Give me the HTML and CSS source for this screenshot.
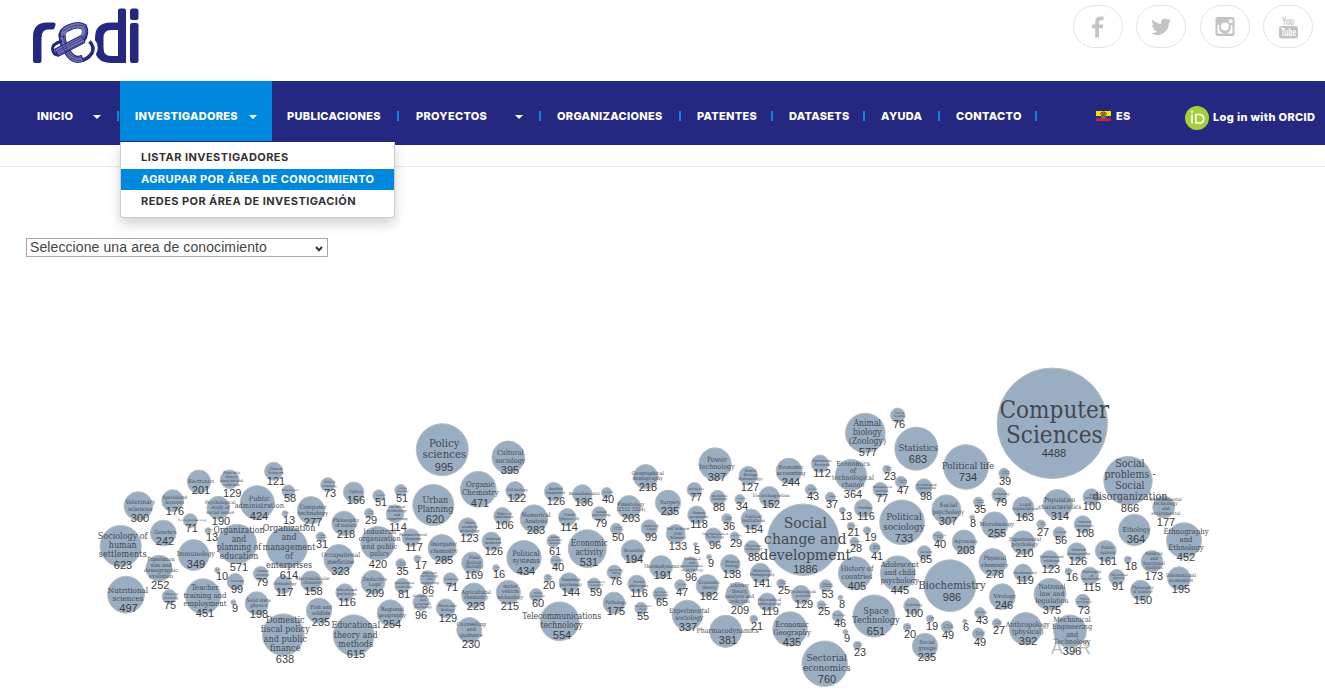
FILE: index.html
```html
<!DOCTYPE html>
<html lang="es">
<head>
<meta charset="utf-8">
<title>REDI</title>
<link rel="stylesheet" href="styles.css">
</head>
<body>
<header class="top">
  <svg class="logo" viewBox="0 0 108 58" width="108" height="58" aria-label="redi">
    <g fill="#252880">
      <path d="M1 54V30Q1 15.500 15 15.500H21.500Q24 15.500 23.500 18L22.500 21Q22 22.500 20 22.500H16Q9.500 22.500 9.500 31V54Q9.500 56 7.500 56H3Q1 56 1 54z"/>
      <path fill-rule="evenodd" d="M86 3.500Q86 1.500 88 1.500H92Q94 1.500 94 3.500V56H80Q63 56 63 41V31Q63 15.500 79 15.500H86zM86 23H79Q71.500 23 71.500 31V41Q71.500 49 79 49H86z"/>
      <rect x="98" y="1.500" width="8.500" height="11.500" rx="2.500"/>
      <rect x="98" y="16" width="8.500" height="40" rx="2.200"/>
    </g>
    <g fill="none">
      <path stroke="#fff" stroke-width="8" d="M50 53Q63 47 61.500 39Q61 36 58 34"/>
      <path stroke="#252880" stroke-width="3.500" d="M44 53Q54 55 60 46Q63 40 57.500 34.500"/>
      <path stroke="#252880" stroke-width="7" d="M30 27Q30 38 37 47Q43 55 51 51"/>
      <path stroke="#7476b2" stroke-width="5" d="M30 28Q30 38 37 47Q43 55 50 51.500"/>
      <path stroke="#252880" stroke-width="3" d="M30 34Q20 37 20.500 42Q21 48 27 48"/>
      <path stroke="#252880" stroke-width="6.500" d="M30 30Q29 24 36 21Q46 16 52 20Q55 26 50 33"/>
      <path stroke="#7476b2" stroke-width="4.500" d="M31 29Q30 24 36 21Q46 16 51.500 20Q54 26 49 32"/>
      <path stroke="#252880" stroke-width="9" d="M24 46L51 32"/>
      <path stroke="#7476b2" stroke-width="7" d="M25 45.500L51 32"/>
      <path stroke="#252880" stroke-width=".7" d="M25 44L52 29M25 46L53 31M26 48L53 34M28 27Q28 39 36 48Q42 55 50 53M31 27Q32 39 38 47Q44 53 50 50M31 24Q42 16 52 19Q56 26 50 32"/>
    </g>
  </svg>
  <nav class="social">
    <a class="round"><svg width="20" height="22" viewBox="0 0 20 22"><path d="M15.500 .5v3.700h-2.300q-2.200 0-2.200 2V8.500h4.300l-.6 3.700H11V21.500H7.200v-9.300H4V8.500h3.200V6Q7.200.5 12.500.5z"/></svg></a>
    <a class="round"><svg width="20" height="22" viewBox="0 0 20 22"><path d="M20 4.500q-1 1.400-2 2.100C18.300 13.500 13 19 6.500 19 4 19 2 18.300.300 17.200q3.600.200 5.900-1.700-3-.200-3.900-2.900h1.900Q1 11.600 1 8.500q1 .500 1.900.500Q.200 6.500 1.600 3.500 5 7.500 10 7.800 9.200 3 14 2.500q1.600 0 2.900 1.300L19.500 2.700Q19 4.200 17.800 5z"/></svg></a>
    <a class="round"><svg width="20" height="22" viewBox="0 0 20 22"><path fill-rule="evenodd" d="M2.500 1h15q2 0 2 2v15q0 2-2 2h-15q-2 0-2-2V3q0-2 2-2zM14 3.500V7h3.500V3.500zM2.500 9V17.500h15V9h-2a6 6 0 1 1-11 0zM10 6.500a4 4 0 1 0 0 8 4 4 0 0 0 0-8z"/></svg></a>
    <a class="round"><svg width="22" height="26" viewBox="0 0 22 26"><rect x="2" y="12" width="19" height="12.500" rx="3"/><text class="yt" x="11" y="10.500" text-anchor="middle" textLength="12" lengthAdjust="spacingAndGlyphs">You</text><text class="yt on" x="11.500" y="22" text-anchor="middle" textLength="15" lengthAdjust="spacingAndGlyphs">Tube</text></svg></a>
  </nav>
</header>
<div class="bar">
  <ul class="menu">
    <li class="inicio">INICIO<i class="caret"></i></li>
    <li class="active">INVESTIGADORES<i class="caret"></i>
      <ul class="drop">
        <li>LISTAR INVESTIGADORES</li>
        <li class="sel">AGRUPAR POR ÁREA DE CONOCIMIENTO</li>
        <li>REDES POR ÁREA DE INVESTIGACIÓN</li>
      </ul>
    </li>
    <li class="m3">PUBLICACIONES</li>
    <li class="m4">PROYECTOS<i class="caret"></i></li>
    <li class="m5">ORGANIZACIONES</li>
    <li class="m6">PATENTES</li>
    <li class="m7">DATASETS</li>
    <li class="m8">AYUDA</li>
    <li class="m9">CONTACTO</li>
  </ul>
  <div class="lang"><svg width="15" height="10"><path fill="#ffe000" d="M0 0h15v5H0z"/><path fill="#1b3a9c" d="M0 5h15v3H0z"/><path fill="#d81e2c" d="M0 7.500h15V10H0z"/><ellipse cx="7.500" cy="5" rx="2.600" ry="3.200" fill="#8a6a3c"/><path stroke="#493421" d="M4 3q3.500-4 7 0" fill="none"/></svg><span>ES</span></div>
  <div class="orcid"><svg width="24" height="24" viewBox="0 0 24 24"><circle cx="12" cy="12" r="12" fill="#a6ce39"/><path d="M7 8.500v9M10.800 8.500h3.700q4.200.200 4.200 4.200t-4.200 4.300h-3.700z" stroke="#fff" stroke-width="1.600" fill="none"/><circle cx="7" cy="5.600" r="1.200" fill="#fff"/></svg><span>Log in with ORCID</span></div>
</div>
<main>
  <div class="select"><span>Seleccione una area de conocimiento</span><svg width="8" height="6"><path d="M1 1L4 4.200L7 1" fill="none" stroke="#333" stroke-width="2"/></svg></div>
  <svg class="cloud" width="1325" height="340" viewBox="0 357 1325 340"></svg>
</main>
<script src="bubbles.js"></script>
</body>
</html>
```

FILE: styles.css
```css
* { box-sizing: border-box; }
body { margin: 0; width: 1325px; height: 697px; overflow: hidden; background: #fff; font-family: "Liberation Sans", Arial, sans-serif; color: #333; }
.top { height: 81px; display: flex; justify-content: space-between; padding: 7px 12px 0 32px; }
.logo { display: block; }
.social { display: flex; gap: 13.500px; margin-top: -2px; }
.round { width: 50px; height: 43px; border: 1px solid #e3e3e3; border-radius: 22px; display: flex; align-items: center; justify-content: center; }
.round svg { fill: #c4c4c4; overflow: visible; }
.yt { font: bold 10px "Liberation Sans", sans-serif; fill: #c4c4c4; }
.yt.on { fill: #fff; }
.bar { height: 64px; background: #252880; color: #fff; display: flex; font: 800 11px/14px Inter, sans-serif; letter-spacing: .3px; }
ul { list-style: none; margin: 0; padding: 0; }
.menu { display: flex; width: 1096px; flex: none; }
.menu > li { position: relative; height: 60px; padding: 28px 0 0 15px; white-space: nowrap; }
.menu > li::after { content: ""; position: absolute; right: 1px; top: 30px; width: 2px; height: 10px; background: #0088dd; }
.menu > .inicio { width: 120px; padding-left: 37px; }
.menu > .active { width: 152px; background: #0088dd; }
.menu > .active::after { display: none; }
.menu > .m3 { width: 128px; }
.menu > .m4 { width: 142px; padding-left: 16px; }
.menu > .m5 { width: 140px; }
.menu > .m6 { width: 92px; }
.menu > .m7 { width: 92px; }
.menu > .m8 { width: 75px; }
.menu > .m9 { width: 97px; }
.caret { position: absolute; top: 34px; right: 15px; border: 4px solid transparent; border-top-color: #fff; border-bottom: 0; }
.inicio .caret, .m4 .caret { right: 19px; }
.drop { position: absolute; z-index: 2; left: 0; top: 61px; width: 275px; height: 76px; padding: 5px 0; background: #fff; border: 1px solid #ccc; border-top: 0; border-radius: 0 0 4px 4px; box-shadow: 0 6px 12px rgba(0,0,0,.175); color: #333; font-weight: 700; letter-spacing: .43px; }
.drop li { height: 22px; padding: 3px 20px 0; }
.drop .sel { background: #0088dd; color: #fff; height: 21px; margin-bottom: 1px; }
.lang { display: flex; align-items: center; gap: 5px; width: 89px; padding-top: 6px; }
.orcid { display: flex; align-items: center; gap: 4px; padding-top: 9px; white-space: nowrap; letter-spacing: .36px; }
.orcid span { margin-top: -2px; }
main { border-top: 1px solid #e9e9e9; margin-top: 21px; padding-top: 71px; }
.select { width: 302px; height: 19px; margin-left: 26px; border: 1px solid #a9a9a9; display: flex; justify-content: space-between; align-items: center; padding: 0 4px 0 3px; font-size: 14px; letter-spacing: .1px; color: #444; }
.select span { margin-top: -1px; }
.select svg { margin-top: 3px; }
.cloud { display: block; margin-top: 100px; }
.cloud circle { fill: #99aec3; stroke: #bbb; stroke-width: 1; }
.cloud text { text-anchor: middle; fill: #3c3c3c; }
.cloud .name { font-family: "DejaVu Serif", serif; font-stretch: condensed; fill: #454850; }
.cloud .num { font-size: 11px; }
.cloud .ghost { fill: #bbb; font-size: 18px; }
```

FILE: bubbles.js
```js
// cx, cy, publications, centre of the figure, label lines
const data = `
199 481.7 201 201 Electronics
229.7 479.3 129 232.3 Fine arts|theory,|analysis and|criticism
138.3 506 300 140 Veterinary|sciences
172.7 500.7 176 175 Specialized|histories
218.3 507.7 190 221 Psychological|study of|social issues
190.3 520.7 71 191.7 Psychopharmacology
208 530.7 13 212 Ecology
163.3 533 242 165 Genetics
120.7 546 623 123 Sociology of|human|settlements
237 544 571 239 Organization|and|planning of|education
257.3 502.7 424 259 Public|administration
193.7 555 349 196 Immunology
159 568.3 252 160.3 Population|size and|demographic|evolution
217.3 570 10 222 Linguistics
126 594.7 497 128.5 Nutritional|sciences
169.3 596.7 75 170 Industrial|technology
203 596.3 451 205 Teacher|training and|employment
235.3 581.7 99 237 Nursing
233.3 602.3 9 235 History
256.7 603.3 198 259 Solid state|physics
260.7 573.7 79 262 General|sociology
273.7 471.3 121 276 Clinical|Sciences
288.3 491.3 58 290 Biomechanics
327.7 484.7 73 330 Medical|technology
353.7 492.3 156 356 Optics
378.7 495.7 51 381 Geology
400.7 490.3 51 402 Human|physiology
311 510.3 277 313 Computer|technology
285 513.7 13 289 Ethics
344 523.3 218 346 Philosophy|of nature
369 513 29 371 Food|science
395 513.7 114 398 Electrical|technology|and|engineering
377.7 543.3 420 378 Industrial|organization|and public|policy
411 537.7 117 414 Pharmaceutical|chemistry
287 547.3 614 289 Organization|and|management|of|enterprises
320.7 536.7 31 322 Labour|economics
338.7 559.3 323 340.5 Occupational|medicine
400.7 563.7 35 402.5 Social|security
417.3 558.7 17 421 Hydraulics
283 584.7 117 284.5 Methodology
311 581.3 158 313.5 Macromolecular|chemistry
344.7 592.7 116 347 Educational|psychology
373 582.3 209 375 Deductive|Logic
402.3 585.7 81 404 Metallurgical|technology
319 610.7 235 321 Fish and|wildlife
390.3 613 254 392 Regional|geography
353.7 635.3 615 356 Educational|theory and|methods
283.3 634.7 638 285 Domestic|fiscal policy|and public|finance
442.3 449.7 995 444 Policy|sciences
508.3 457.3 395 510 Cultural|sociology
478.3 489.3 471 480 Organic|Chemistry
515 490.7 122 517 Cell biology
553.7 491.7 126 556 Applied|linguistics
433.3 505 620 435 Urban|Planning
502.3 516 106 504.5 Ethics of|individuals
534 518.7 283 536 Numerical|Analysis
567.3 517.3 114 569 Fluids|(physics of)
467.7 527 123 469.5 Meat|products|technology
491.3 541.3 126 494 Internal|medicine
553.3 541 61 555 Animal|husbandry|medicine
442 548.3 285 444 Inorganic|chemistry
524 557.7 434 526 Political|systems
555.7 560.7 40 558 Cosmology
472.3 562.7 169 474 Plant|Biology|(Botany)
496 568 16 499 Statics
547.7 578 20 549 Cultural|history
427.7 578.3 86 428 Materials|technology|and|engineering
450.3 579.7 71 452 Limnology
569 582.7 144 571 Abnormal|psychology
474 595.3 223 476 Agricultural|chemistry
508.3 592.3 215 510 motor|vehicle|technology
536 595 60 538 Textile|technology
421 602.3 96 421 Occupational|and|personnel|psychology
445.7 608.3 129 448 Molecular|biology
469.3 630 230 471 Counselling|and|guidance
559.7 621.3 554 562 Telecommunications|technology
582.3 494.3 136 584 Biomathematics
606.7 492.7 40 608 Biometrics
645.7 476.7 218 648 Geographical|demography
629 507.3 203 631 Planetology|(2512 3324)
599.3 514 79 601 Human|paleontology
668 502.7 235 670 Surgery
694.3 489.7 77 696 Mechanics
715 464 387 717 Power|technology
717.7 498 88 719 Analytical|chemistry
696.7 515 118 699 Human|geography
726.7 518.7 36 729 Public|health
616.3 529 50 618 Labour|relations
649.3 528 99 651 Inductive|Logic
675.7 534 133 678 Soil Science|(Soil|Science)
695.3 544.3 5 697 Theory
713.3 536 96 715 Instrumentation|Technology
587.3 548.7 531 589 Economic|activity
632.7 551.3 194 634 Acoustics
661 567 191 663 Thermodynamics
709 557 9 711 Values
690.3 565 96 691 Evaluation|and|measurement|in psychology
730.3 564.3 138 732 Human|biology
614.3 572.3 76 616 Agronomy|theory
594 584.3 59 596 Mathematical|economics
636.7 584 116 639 Social|philosophy
680.3 585.3 47 682 Virology
707.3 585.7 182 709 Economic|theory
659.7 594 65 662 Aerospace|physiology
614 603 175 616 Pathology
641 608.3 55 643 International|policy
687.3 615.3 337 688 Experimental|sociology
725.7 631.3 381 728 Pharmacodynamics
748.3 475.7 127 750 Insect|Biology|(Entomology)
789 471 244 791 Economic|accounting
820 463.7 112 822 Operations|Research
769.3 496.7 152 771 Electromagnetism
810.7 489.7 43 813 Forestry
830.3 497.3 37 832 Algebra
739.7 499.3 34 742 Aesthetics
751.3 519.3 154 754 Political|Institutions
734.7 536.3 29 736 Ornithology
752 548.3 88 754 Electronic|technology
803.3 539.7 1886 805.5 Social|change and|development
760.3 573 141 762 Historical|Demography
781 583.3 25 784 Railway|systems
801 594.7 129 804 Technological|process
825.7 585.7 53 827.5 Political|economics
840.3 597.7 8 842 Methods
821.3 605 25 824 Dynamics
767.3 602 119 770 Philosophical|anthropology
737.7 594.3 209 740 Literary|theory,|analysis and|criticism
753.7 619 21 757 General|history
790 629 435 792 Economic|Geography
837.7 616 46 840 Geophysics
845.3 632 9 847 Topology
824.7 663.7 760 827 Sectorial|economics
842.3 510.3 13 846 Legal
865.3 433 577 868 Animal|biology|(Zoology)
897.7 415.3 76 899 Social|Systems
916.3 448.7 683 918 Statistics
966 467 734 968 Political life
851 475 364 853 Economics|of|technological|change
886.7 469.3 23 890 Physical|studies
880.3 489.7 77 882 Mathematical|sociology
901 482 47 903 Number|theory
924 487 98 926 International|organization
863.3 508.3 116 866 Fertility
851 526 21 853.5 Climatology
867 530.3 19 870.5 Music|theory
902 522.3 733 904 Political|sociology
946.3 509.3 307 948 Social|psychology
978.3 502 35 980 Forensic|science
972 517.3 8 973 Moral
938 536.7 40 940 Fiscal policy|theory
964 541.7 203 966 Agronomy
854.3 541.7 28 856 Geochemistry
874.7 548 41 877 Family|studies
924.3 552.3 65 926 Mortality
855 573.3 405 857 History of|countries
897.7 573.3 445 900 Adolescent|and child|psychology
950 585.7 986 952 Biochemistry
912 606 100 914 Hydrology
874 616 651 876 Space|Technology
907 627 20 910 Marine|biology
930 618.7 19 932 Radio|biology
947 626.7 49 948 Group|dynamics
964.7 621.3 6 966 Lexicology
980 613 43 982 Biophysics
978.3 633.7 49 980 Physical|therapy
996.7 623 27 999 Group|theory
925 646 235 927 Social|groups
857.3 645.3 23 860 Nuclear|physics
1052.3 423.3 4488 1054 Computer|Sciences
1004 473.3 39 1005 Human|ecology
999.3 495 79 1001 Probability
1023.3 507.3 163 1025 Legal|organization
1057.7 504 314 1060 Population|characteristics
1091.3 497 100 1092 Food|technology
1128 480.7 866 1130 Social|problems -|Social|disorganization
1163.7 507 177 1166 Environmental|technology|and|enviromental
994.7 525 255 997 Microbiology
1041 524.3 27 1043 Game|theory
1059.3 533 56 1061 Geometry
1082.7 524.3 108 1085 General|economics
1134.3 530 364 1136 Ethology
1184 540.3 452 1186 Ethnography|and|Ethnology
1023 542.7 210 1024.5 Experimental|psychology
992.7 562.3 278 995 Physical|chemistry
1049.7 559.7 123 1051 International|relations
1076.7 552 126 1078 General|demography
1105.7 551 161 1108 Public|opinion
1127.7 559.7 18 1131 Genres
1152 561.3 173 1154 Analysis|and|functional|analysis
1179 578.3 195 1181 International|economics
1023 573 119 1025 Biochemistry
1068.3 571.3 16 1072 Onomastics
1089.7 576 115 1092 Philosophy|of|knowledge
1116.7 577.3 91 1118 Theoretical|physics
1140.7 590.3 150 1143 Philosophy|of science
1050 594.3 375 1052 National|law and|legislation
1082.7 601.3 73 1084 Optics|economics
1002.3 596.7 246 1004 Virology
1025.7 628.7 392 1028 Anthropology|(physical)
1070 631.3 396 1072 Mechanical|Engineering|and|Technology`;

const items = data.trim().split('\n').map(row => {
  const [cx, cy, n, nx, ...rest] = row.split(' ');
  return { cx: +cx, cy: +cy, n: +n, nx: +nx, lines: rest.join(' ').split('|'), r: 0.824 * Math.sqrt(+n) };
});

let out = '<text class="ghost" x="1071" y="654" textLength="40">AUR</text>';
for (const d of items) out += `<circle cx="${d.cx}" cy="${d.cy}" r="${d.r}"/>`;
for (const d of items) {
  const step = d.r * 0.445;
  d.lines.forEach((line, i) => {
    const y = d.cy - 0.7 + (i - (d.lines.length - 1) / 2) * step + step * 0.32;
    out += `<text class="name" x="${d.cx + 2}" y="${y}" font-size="${step * 0.98}">${line}</text>`;
  });
  out += `<text class="num" x="${d.nx}" y="${d.cy + d.lines.length * step / 2 + 9.3}">${d.n}</text>`;
}
document.querySelector('.cloud').innerHTML = out;
```
